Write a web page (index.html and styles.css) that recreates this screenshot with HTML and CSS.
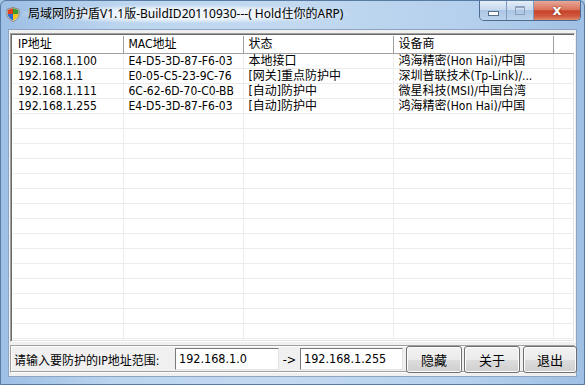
FILE: index.html
```html
<!DOCTYPE html>
<html>
<head>
<meta charset="utf-8">
<link rel="stylesheet" href="styles.css">
</head>
<body>
<div class="window">
  <div class="titlebar">
    <svg class="app-icon" width="14" height="15" viewBox="0 0 14 15">
      <path d="M7 0.5 L13 2.5 L13 7 C13 10.5 10.5 13 7 14.5 C3.5 13 1 10.5 1 7 L1 2.5 Z" fill="#e8e8e8" stroke="#7a6a50" stroke-width="0.8"/>
      <path d="M7 1.3 L7 7 L1.8 7 L1.8 3 Z" fill="#e2401f"/>
      <path d="M7 1.3 L12.2 3 L12.2 7 L7 7 Z" fill="#3c9a2e"/>
      <path d="M1.8 7 L7 7 L7 13.6 C4.2 12.3 1.9 10.2 1.8 7 Z" fill="#2e6cd0"/>
      <path d="M7 7 L12.2 7 C12.1 10.2 9.8 12.3 7 13.6 Z" fill="#f3c21c"/>
    </svg>
    <div class="title">局域网防护盾V1.1版-BuildID20110930---( Hold住你的ARP)</div>
    <div class="caption-buttons">
      <div class="cbtn cmin"><span class="min-glyph"></span></div>
      <div class="cbtn cmax"><span class="max-glyph"></span></div>
      <div class="cbtn cclose">x</div>
    </div>
  </div>
  <div class="client">
    <div class="listview">
      <table class="grid">
        <colgroup>
          <col class="c1"><col class="c2"><col class="c3"><col class="c4"><col class="c5">
        </colgroup>
        <thead>
          <tr><th>IP地址</th><th>MAC地址</th><th>状态</th><th>设备商</th><th></th></tr>
        </thead>
        <tbody>
          <tr><td>192.168.1.100</td><td>E4-D5-3D-87-F6-03</td><td>本地接口</td><td>鸿海精密(Hon Hai)/中国</td><td></td></tr>
          <tr><td>192.168.1.1</td><td>E0-05-C5-23-9C-76</td><td>[网关]重点防护中</td><td>深圳普联技术(Tp-Link)/...</td><td></td></tr>
          <tr><td>192.168.1.111</td><td>6C-62-6D-70-C0-BB</td><td>[自动]防护中</td><td>微星科技(MSI)/中国台湾</td><td></td></tr>
          <tr><td>192.168.1.255</td><td>E4-D5-3D-87-F6-03</td><td>[自动]防护中</td><td>鸿海精密(Hon Hai)/中国</td><td></td></tr>
          <tr><td></td><td></td><td></td><td></td><td></td></tr>
          <tr><td></td><td></td><td></td><td></td><td></td></tr>
          <tr><td></td><td></td><td></td><td></td><td></td></tr>
          <tr><td></td><td></td><td></td><td></td><td></td></tr>
          <tr><td></td><td></td><td></td><td></td><td></td></tr>
          <tr><td></td><td></td><td></td><td></td><td></td></tr>
          <tr><td></td><td></td><td></td><td></td><td></td></tr>
          <tr><td></td><td></td><td></td><td></td><td></td></tr>
          <tr><td></td><td></td><td></td><td></td><td></td></tr>
          <tr><td></td><td></td><td></td><td></td><td></td></tr>
          <tr><td></td><td></td><td></td><td></td><td></td></tr>
          <tr><td></td><td></td><td></td><td></td><td></td></tr>
          <tr><td></td><td></td><td></td><td></td><td></td></tr>
          <tr><td></td><td></td><td></td><td></td><td></td></tr>
          <tr><td></td><td></td><td></td><td></td><td></td></tr>
          <tr><td></td><td></td><td></td><td></td><td></td></tr>
        </tbody>
      </table>
    </div>
    <div class="panel">
      <span class="label">请输入要防护的IP地址范围:</span>
      <div class="input in1">192.168.1.0</div>
      <span class="arrow">-&gt;</span>
      <div class="input in2">192.168.1.255</div>
      <div class="btn b1">隐藏</div>
      <div class="btn b2">关于</div>
      <div class="btn b3">退出</div>
    </div>
  </div>
</div>
</body>
</html>
```

FILE: styles.css
```css
html, body {
  margin: 0;
  padding: 0;
}
body {
  width: 585px;
  height: 385px;
  overflow: hidden;
  background: #a9c6e6;
  font-family: "DejaVu Sans Condensed", "Noto Sans CJK SC", sans-serif;
  font-stretch: condensed;
  font-size: 12px;
  color: #000;
}
.window {
  width: 585px;
  height: 385px;
  box-sizing: border-box;
  display: flex;
  flex-direction: column;
  background: linear-gradient(90deg, #9dbfe4 0%, #bcd5ef 20%, #c2d9f0 50%, #b5d0ed 80%, #9fc0e4 100%);
  border: 1px solid #587ba3;
  border-radius: 6px 6px 0 0;
}
.titlebar {
  height: 28px;
  display: flex;
  align-items: flex-start;
}
.app-icon {
  margin: 6px 0 0 5px;
  flex: none;
}
.title {
  margin: 4px 0 0 2px;
  font-family: "Noto Sans", "Noto Sans CJK SC", sans-serif;
  font-stretch: normal;
  font-size: 12px;
  line-height: 18px;
  color: #000;
  padding: 0 6px;
  background: radial-gradient(ellipse at center, rgba(255,255,255,0.75) 40%, rgba(255,255,255,0) 75%);
}
.caption-buttons {
  margin-left: auto;
  margin-right: 3px;
  display: flex;
  height: 19px;
  border: 1px solid #4b6b90;
  border-top: none;
  border-radius: 0 0 5px 5px;
  overflow: hidden;
}
.cbtn {
  height: 19px;
  display: flex;
  align-items: center;
  justify-content: center;
}
.cmin, .cmax {
  width: 26px;
  background: linear-gradient(#e3edf8 0%, #c8daee 45%, #abc6e3 50%, #bcd3ec 100%);
  border-right: 1px solid #7d99bb;
}
.min-glyph {
  display: block;
  width: 9px;
  height: 3px;
  margin-top: 5px;
  background: #fff;
  border: 1px solid #55708f;
}
.max-glyph {
  display: block;
  width: 8px;
  height: 6px;
  border: 1px solid #7d94b0;
  border-top-width: 2px;
  opacity: 0.8;
}
.cclose {
  width: 46px;
  background: linear-gradient(#e8a898 0%, #d9745d 45%, #c7432a 52%, #d0593f 80%, #e08a6c 100%);
  color: #fff;
  font-family: "DejaVu Sans", sans-serif;
  font-stretch: normal;
  font-weight: bold;
  font-size: 14px;
  line-height: 19px;
  text-shadow: 0 0 2px #6a1a0a;
}
.client {
  flex: 1;
  margin: 0 7px 7px 7px;
  background: #f0f0f0;
  border: 1px solid #8da5c0;
  display: flex;
  flex-direction: column;
  padding: 3px 1px 3px 1px;
}
.listview {
  height: 305px;
  background: #fff;
  border: 1px solid;
  border-color: #a0a0a0 #ffffff #ffffff #a0a0a0;
  box-shadow: inset 1px 1px 0 #696969, inset -1px -1px 0 #e3e3e3;
  padding: 2px 0 0 2px;
  overflow: hidden;
}
.grid {
  border-collapse: collapse;
  table-layout: fixed;
  width: 563px;
}
.c1 { width: 110px; }
.c2 { width: 120px; }
.c3 { width: 150px; }
.c4 { width: 160px; }
.c5 { width: 23px; }
.grid th {
  height: 17px;
  padding: 0 0 0 5px;
  font-weight: normal;
  text-align: left;
  background: #fff;
  border-right: 1px solid #a0a0a0;
  border-bottom: 1px solid #a0a0a0;
  box-shadow: inset 1px 1px 0 #fff;
  line-height: 17px;
  white-space: nowrap;
}
.grid td {
  height: 14px;
  padding: 0 0 0 5px;
  line-height: 14px;
  border-right: 1px solid #ececec;
  border-bottom: 1px solid #ececec;
  white-space: nowrap;
  overflow: hidden;
}
.panel {
  margin-top: 3px;
  height: 26px;
  border: 1px solid;
  border-color: #a0a0a0 #ffffff #ffffff #a0a0a0;
  box-shadow: inset -1px -1px 0 #a0a0a0, inset 1px 1px 0 #fff;
  display: flex;
  align-items: center;
  padding-left: 3px;
}
.label {
  width: 161px;
  flex: none;
  white-space: nowrap;
}
.input {
  background: #fff;
  border: 1px solid;
  border-color: #7a7a7a #e3e3e3 #e3e3e3 #7a7a7a;
  padding-left: 3px;
  font-size: 12.5px;
  line-height: 20px;
  box-sizing: border-box;
  height: 22px;
  flex: none;
}
.in1 { width: 104px; }
.arrow {
  width: 21px;
  text-align: center;
  font-size: 12.5px;
  flex: none;
}
.in2 { width: 103px; }
.btn {
  flex: none;
  height: 27px;
  box-sizing: border-box;
  border: 1px solid #707070;
  border-radius: 3px;
  background: linear-gradient(#f2f2f2 0%, #ebebeb 50%, #dddddd 51%, #cfcfcf 100%);
  box-shadow: inset 0 0 0 1px #fcfcfc;
  display: flex;
  align-items: center;
  justify-content: center;
  font-size: 13px;
}
.b1 { width: 56px; margin-left: 3px; }
.b2 { width: 56px; margin-left: 2px; }
.b3 { width: 54px; margin-left: 3px; }
```
